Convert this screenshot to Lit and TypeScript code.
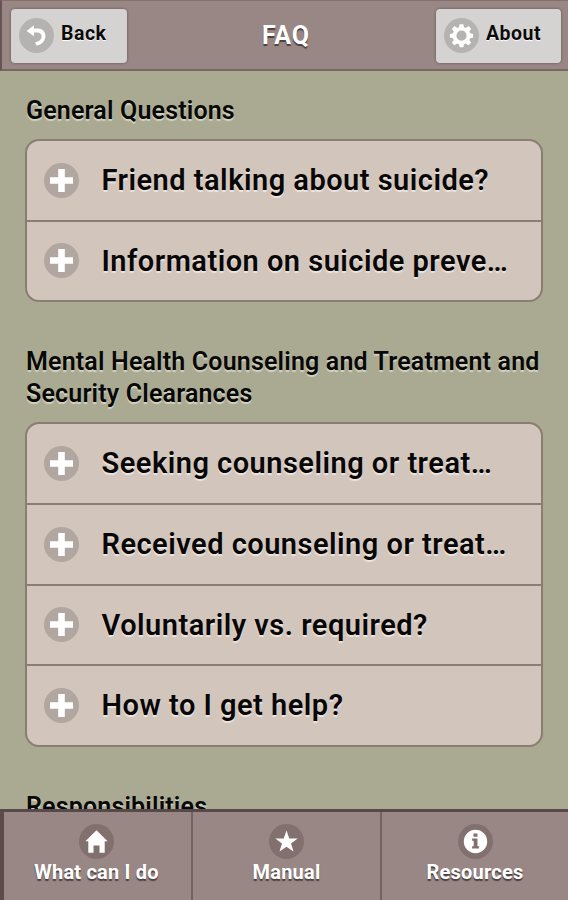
import { LitElement, html, svg, css } from "lit";
import { customElement, property } from "lit/decorators.js";

const glyphs: Record<string, unknown> = {
  back: svg`<path d="M7.6 13 15 7.2v3.4h3.6c4.8 0 7.8 3 7.8 7.4 0 5-3.6 8.8-9 9.6l-1.4-3.4c4-.5 6.6-2.8 6.6-5.8 0-2.4-1.7-3.8-4.4-3.8H15v3.6z"/>`,
  gear: svg`<path fill-rule="evenodd" d="M15.7 6.2h3.6l.8 3 1.6.7 2.8-1.8 2.6 2.6-1.7 2.8.7 1.7 3 .7v3.6l-3 .7-.7 1.7 1.7 2.8-2.6 2.6-2.8-1.7-1.6.7-.8 3h-3.6l-.8-3-1.6-.7-2.8 1.7-2.6-2.6 1.7-2.8-.7-1.7-3-.7v-3.6l3-.7.7-1.7-1.7-2.8 2.6-2.6 2.8 1.8 1.6-.7zM17.5 12.6a5.1 5.1 0 1 0 0 10.2 5.1 5.1 0 0 0 0-10.2z"/>`,
  plus: svg`<path d="M14.2 6h6.6v8.2h8.2v6.6h-8.2V29h-6.6v-8.2H6v-6.6h8.2z"/>`,
  home: svg`<path d="M17.5 6.2 28.6 17.3h-2.9V28.8h-5.2v-7.4h-6v7.4H9.3V17.3H6.4z"/>`,
  star: svg`<path d="m17.5 6.4 2.8 8h8.4l-6.7 5 2.5 8.2-7-4.9-7 4.9 2.5-8.2-6.7-5h8.4z"/>`,
  info: svg`<path fill-rule="evenodd" d="M17.5 5.8a11.7 11.7 0 1 0 0 23.4 11.7 11.7 0 0 0 0-23.4zM15.5 9.6h4v3.2h-4zm-1.4 4.8h5.4v7.8h1.6v2.4h-7v-2.4h1.6v-5.4h-1.6z"/>`,
};

@customElement("round-icon")
class RoundIcon extends LitElement {
  @property() name = "plus";
  static styles = css`
    :host { display: block; width: 35px; height: 35px; flex: none; border-radius: 50%; background: var(--disc, #b1a7a0); }
    svg { display: block; width: 35px; height: 35px; fill: #fff; }
  `;
  render() {
    return html`<svg viewBox="0 0 35 35">${glyphs[this.name]}</svg>`;
  }
}

@customElement("faq-section")
class FaqSection extends LitElement {
  @property() heading = "";
  @property({ attribute: false }) items: string[] = [];
  static styles = css`
    :host { display: block; }
    h2 { margin: 0 0 12px; font-size: 25px; font-weight: 600; line-height: 32px; letter-spacing: 0.17px; color: #080806; text-shadow: 0 2px 1px #d3d3c5; white-space: pre; }
    .list { border: 2px solid #8a7d72; border-radius: 14px; background: #d1c5bc; overflow: hidden; margin: 0 0 44px -1px; }
    .row { display: flex; align-items: center; box-sizing: border-box; height: 80.75px; padding: 0 24px 0 17px; border-bottom: 2px solid #8a7d72; }
    .row:last-child { border-bottom: 0; height: 78.25px; }
    .label { flex: 1; margin-left: 22.5px; min-width: 0; white-space: nowrap; font-size: 29px; font-weight: 600; line-height: 40px; letter-spacing: 0.49px; color: #080706; text-shadow: 0 2px 1px #ece5e0; }
  `;
  render() {
    return html`<h2>${this.heading}</h2>
      ${this.items.length
        ? html`<div class="list">${this.items.map((t) => html`<div class="row"><round-icon name="plus"></round-icon><span class="label">${t}</span></div>`)}</div>`
        : ""}`;
  }
}

@customElement("app-root")
class AppRoot extends LitElement {
  static styles = css`
    :host { display: flex; flex-direction: column; height: 900px; overflow: hidden; background: #aaaa92; font-family: Roboto, "Liberation Sans", sans-serif; }
    header { display: grid; grid-template-columns: 116px 1fr 125px; box-sizing: border-box; height: 71px; flex: none; padding: 8px 7px 0 9px; background: #998786; border-top: 1px solid #84706f; border-bottom: 2px solid #756965; border-left: 2px solid #675353; }
    .btn { --disc: #b4b3b1; display: flex; align-items: center; gap: 7px; box-sizing: border-box; height: 54px; padding: 0 0 1px 8px; border-radius: 4px; background: #d5d3d1; box-shadow: 0 0 2px 1px #7c6d6b; color: #0b0b0b; font-size: 19.5px; font-weight: 700; letter-spacing: 0.5px; text-shadow: 0 1px 1px #fff; }
    .btn span { position: relative; top: -2px; }
    h1 { margin: 0; padding-left: 9px; text-align: center; font-size: 25px; font-weight: 700; line-height: 53px; letter-spacing: 0.9px; color: #fff; text-shadow: 0 2px 1px #4c3f3e; }
    main { flex: 1; min-height: 0; overflow: hidden; padding: 24px 25px 0 26px; }
    footer { display: grid; grid-template-columns: 189px 189px 1fr; box-sizing: border-box; height: 91px; flex: none; background: #998786; border-top: 3px solid #57494a; border-left: 4px solid #5b4b4b; }
    .tab { --disc: #82706f; display: flex; flex-direction: column; align-items: center; box-sizing: border-box; padding-top: 12px; border-right: 2px solid #75615f; color: #fff; font-size: 20px; font-weight: 700; line-height: 26px; letter-spacing: 0.2px; text-shadow: 0 2px 1px #4c3f3e; white-space: nowrap; }
    .tab:first-child { padding-right: 2px; }
    .tab:last-child { border-right: 0; }
  `;
  render() {
    return html`
      <header>
        <div class="btn"><round-icon name="back"></round-icon><span>Back</span></div>
        <h1>FAQ</h1>
        <div class="btn"><round-icon name="gear"></round-icon><span>About</span></div>
      </header>
      <main>
        <faq-section heading="General Questions" .items=${["Friend talking about suicide?", "Information on suicide preve…"]}></faq-section>
        <faq-section heading=${"Mental Health Counseling and Treatment and\nSecurity Clearances"} .items=${["Seeking counseling or treat…", "Received counseling or treat…", "Voluntarily vs. required?", "How to I get help?"]}></faq-section>
        <faq-section heading="Responsibilities"></faq-section>
      </main>
      <footer>
        <div class="tab"><round-icon name="home"></round-icon><span>What can I do</span></div>
        <div class="tab"><round-icon name="star"></round-icon><span>Manual</span></div>
        <div class="tab"><round-icon name="info"></round-icon><span>Resources</span></div>
      </footer>`;
  }
}
